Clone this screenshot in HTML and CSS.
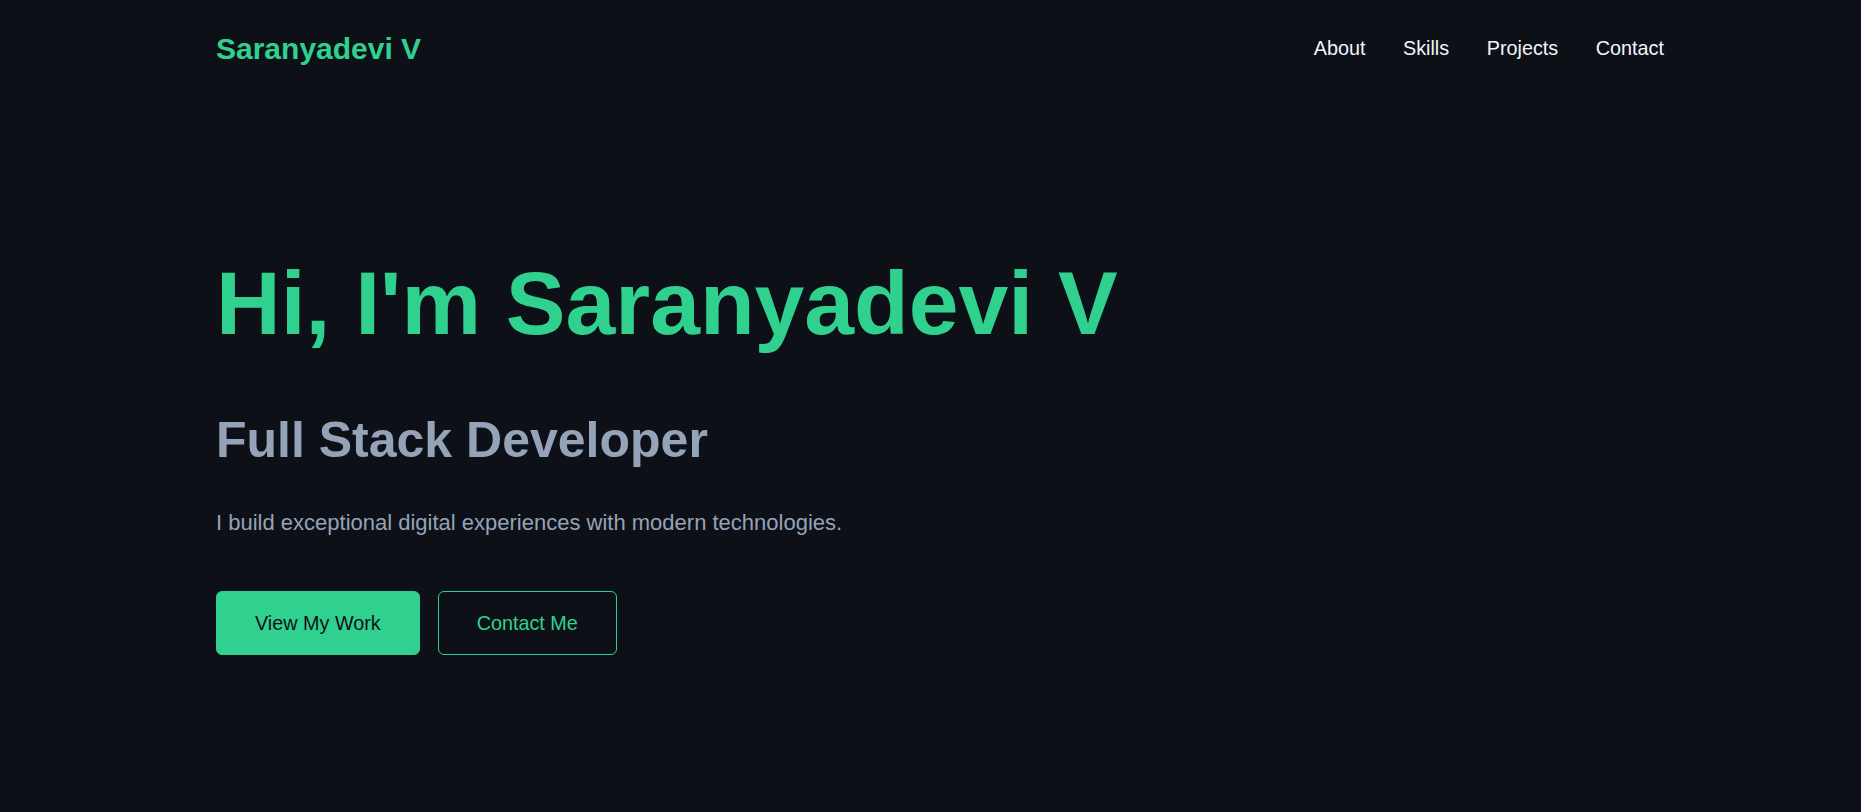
FILE: index.html
```
<!DOCTYPE html>
<html lang="en">
<head>
<meta charset="utf-8">
<title>Saranyadevi V</title>
<link rel="stylesheet" href="styles.css">
</head>
<body>
<header class="site-header">
  <a class="logo" href="#">Saranyadevi V</a>
  <nav class="nav">
    <a href="#about">About</a>
    <a href="#skills">Skills</a>
    <a href="#projects">Projects</a>
    <a href="#contact">Contact</a>
  </nav>
</header>
<main class="hero">
  <h1 class="hero-title">Hi, I'm Saranyadevi V</h1>
  <h2 class="hero-sub">Full Stack Developer</h2>
  <p class="hero-text">I build exceptional digital experiences with modern technologies.</p>
  <div class="hero-actions">
    <a class="btn btn-primary" href="#projects">View My Work</a>
    <a class="btn btn-outline" href="#contact">Contact Me</a>
  </div>
</main>
</body>
</html>
```
FILE: styles.css
```
* { box-sizing: border-box; }
html, body {
  margin: 0;
  padding: 0;
  background: #0d1017;
  min-height: 100%;
}
body {
  font-family: "Liberation Sans", Arial, sans-serif;
  color: #f1f5f9;
  min-height: 812px;
}
a { text-decoration: none; }

.site-header {
  display: flex;
  justify-content: space-between;
  align-items: center;
  padding: 31px 197px 0 216px;
}
.logo {
  font-size: 30px;
  font-weight: 700;
  line-height: 1.2;
  color: #30d08f;
}
.nav {
  display: flex;
  gap: 37.6px;
}
.nav a {
  font-size: 19.8px;
  line-height: 1.2;
  color: #f1f5f9;
}

.hero {
  padding: 0 216px;
}
.hero-title {
  margin: 183.4px 0 0;
  font-size: 89.5px;
  line-height: 1.2;
  font-weight: 700;
  color: #30d08f;
}
.hero-sub {
  margin: 52.3px 0 0;
  font-size: 50px;
  line-height: 1.2;
  font-weight: 700;
  color: #94a3b8;
}
.hero-text {
  margin: 40.2px 0 0;
  font-size: 22px;
  line-height: 1.2;
  color: #94a3b8;
}
.hero-actions {
  display: flex;
  gap: 18px;
  margin-top: 54.4px;
}
.btn {
  display: inline-block;
  font-size: 19.8px;
  line-height: 22px;
  padding: 20px 38px;
  border-radius: 6px;
  border: 1px solid #30d08f;
}
.btn-primary {
  background: #30d08f;
  color: #0d1117;
}
.btn-outline {
  background: transparent;
  color: #30d08f;
}
```
